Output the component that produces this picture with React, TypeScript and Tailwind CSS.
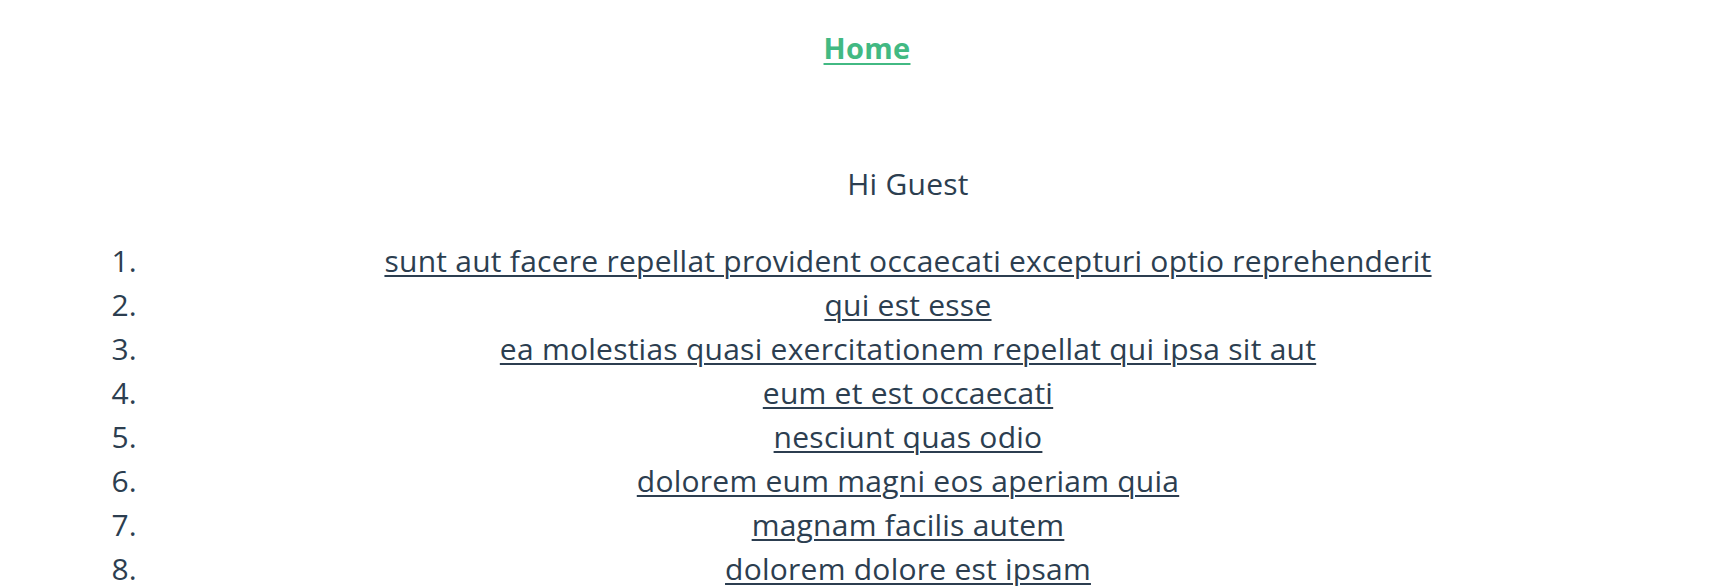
import React from 'react';

const posts = [
  'sunt aut facere repellat provident occaecati excepturi optio reprehenderit',
  'qui est esse',
  'ea molestias quasi exercitationem repellat qui ipsa sit aut',
  'eum et est occaecati',
  'nesciunt quas odio',
  'dolorem eum magni eos aperiam quia',
  'magnam facilis autem',
  'dolorem dolore est ipsam',
];

const App = () => {
  return (
    <div className="min-h-screen bg-white text-[#2c3e50] text-[30px] leading-[44px] tracking-[0.25px] font-['Open_Sans',sans-serif] [font-variant-ligatures:none]">
      {/* Nav */}
      <nav className="pt-[26px] pl-[10px] flex justify-center">
        <a href="#" className="text-[29px] tracking-[0.3px] font-bold text-[#42b983] underline underline-offset-[4px] decoration-[2px]">
          Home
        </a>
      </nav>

      {/* Greeting */}
      <div className="mt-[92px] flex">
        <span className="w-[137px]" />
        <p className="flex-1 text-center">Hi Guest</p>
        <span className="w-[45px]" />
      </div>

      {/* Posts */}
      <ol className="mt-[33px]">
        {posts.map((title, i) => (
          <li key={i} className="flex">
            <span className="w-[137px] text-right">{i + 1}.</span>
            <a href="#" className="flex-1 text-center underline underline-offset-[3px] decoration-[1.5px]">
              {title}
            </a>
            <span className="w-[45px]" />
          </li>
        ))}
      </ol>
    </div>
  );
};

export default App;
